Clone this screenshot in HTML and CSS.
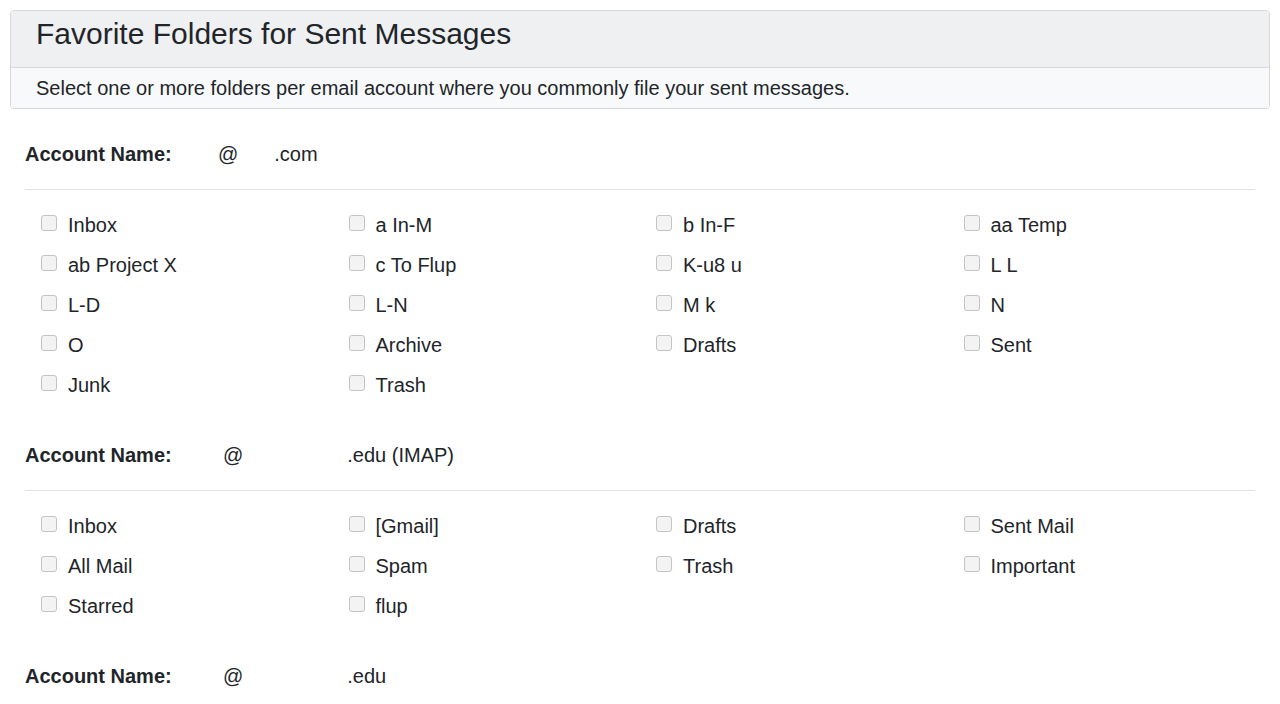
FILE: index.html
```html
<!DOCTYPE html>
<html>
<head>
<meta charset="utf-8">
<link rel="stylesheet" href="styles.css">
</head>
<body>
<div class="page">
  <div class="card">
    <div class="card-header"><h1 class="title">Favorite Folders for Sent Messages</h1></div>
    <div class="card-body">Select one or more folders per email account where you commonly file your sent messages.</div>
  </div>

  <div class="account">
    <div class="account-row"><span class="acct-label">Account Name:</span><span class="gap g1"></span>@<span class="gap g2"></span>.com</div>
    <div class="divider"></div>
    <div class="folders">
      <label class="folder"><span class="box"></span>Inbox</label>
      <label class="folder"><span class="box"></span>a In-M</label>
      <label class="folder"><span class="box"></span>b In-F</label>
      <label class="folder"><span class="box"></span>aa Temp</label>
      <label class="folder"><span class="box"></span>ab Project X</label>
      <label class="folder"><span class="box"></span>c To Flup</label>
      <label class="folder"><span class="box"></span>K-u8 u</label>
      <label class="folder"><span class="box"></span>L L</label>
      <label class="folder"><span class="box"></span>L-D</label>
      <label class="folder"><span class="box"></span>L-N</label>
      <label class="folder"><span class="box"></span>M k</label>
      <label class="folder"><span class="box"></span>N</label>
      <label class="folder"><span class="box"></span>O</label>
      <label class="folder"><span class="box"></span>Archive</label>
      <label class="folder"><span class="box"></span>Drafts</label>
      <label class="folder"><span class="box"></span>Sent</label>
      <label class="folder"><span class="box"></span>Junk</label>
      <label class="folder"><span class="box"></span>Trash</label>
    </div>
  </div>

  <div class="account">
    <div class="account-row"><span class="acct-label">Account Name:</span><span class="gap g3"></span>@<span class="gap g4"></span>.edu (IMAP)</div>
    <div class="divider"></div>
    <div class="folders">
      <label class="folder"><span class="box"></span>Inbox</label>
      <label class="folder"><span class="box"></span>[Gmail]</label>
      <label class="folder"><span class="box"></span>Drafts</label>
      <label class="folder"><span class="box"></span>Sent Mail</label>
      <label class="folder"><span class="box"></span>All Mail</label>
      <label class="folder"><span class="box"></span>Spam</label>
      <label class="folder"><span class="box"></span>Trash</label>
      <label class="folder"><span class="box"></span>Important</label>
      <label class="folder"><span class="box"></span>Starred</label>
      <label class="folder"><span class="box"></span>flup</label>
    </div>
  </div>

  <div class="account">
    <div class="account-row"><span class="acct-label">Account Name:</span><span class="gap g3"></span>@<span class="gap g4"></span>.edu</div>
  </div>
</div>
</body>
</html>
```
FILE: styles.css
```css
html, body {
  margin: 0;
  padding: 0;
  background: #ffffff;
}
body {
  font-family: "Liberation Sans", Arial, sans-serif;
  color: #212529;
  font-size: 20px;
}
.page {
  padding: 10px 10px 0 10px;
}
.card {
  border: 1px solid #d6d8db;
  border-radius: 4px;
  overflow: hidden;
}
.card-header {
  background: #eff0f2;
  border-bottom: 1px solid #d6d8db;
  height: 57px;
  box-sizing: border-box;
  padding: 5px 0 0 25px;
}
.title {
  margin: 0;
  font-weight: normal;
  font-size: 30px;
  line-height: 36px;
}
.card-body {
  background: #f8f9fa;
  height: 40px;
  line-height: 41px;
  padding-left: 25px;
}
.account {
  padding: 0 15px;
}
.account-row {
  margin-top: 31px;
  height: 28px;
  line-height: 28px;
  white-space: nowrap;
}
.acct-label {
  display: inline-block;
  font-weight: bold;
  width: 193px;
}
.gap { display: inline-block; }
.g1 { width: 0; }
.g2 { width: 36px; }
.g3 { width: 5px; }
.g4 { width: 104px; }
.account + .account .account-row { margin-top: 36px; }
.divider {
  margin-top: 21px;
  height: 1px;
  background: #e3e3e3;
}
.folders {
  margin-top: 15px;
  display: grid;
  grid-template-columns: repeat(4, 1fr);
}
.folder {
  height: 40px;
  display: flex;
  align-items: center;
  padding-left: 16px;
  line-height: 22px;
}
.box {
  width: 14px;
  height: 14px;
  border: 1px solid #c4c4c4;
  border-radius: 3px;
  background: #f3f3f3;
  margin-right: 11px;
  position: relative;
  top: -2px;
  flex: none;
}
```
